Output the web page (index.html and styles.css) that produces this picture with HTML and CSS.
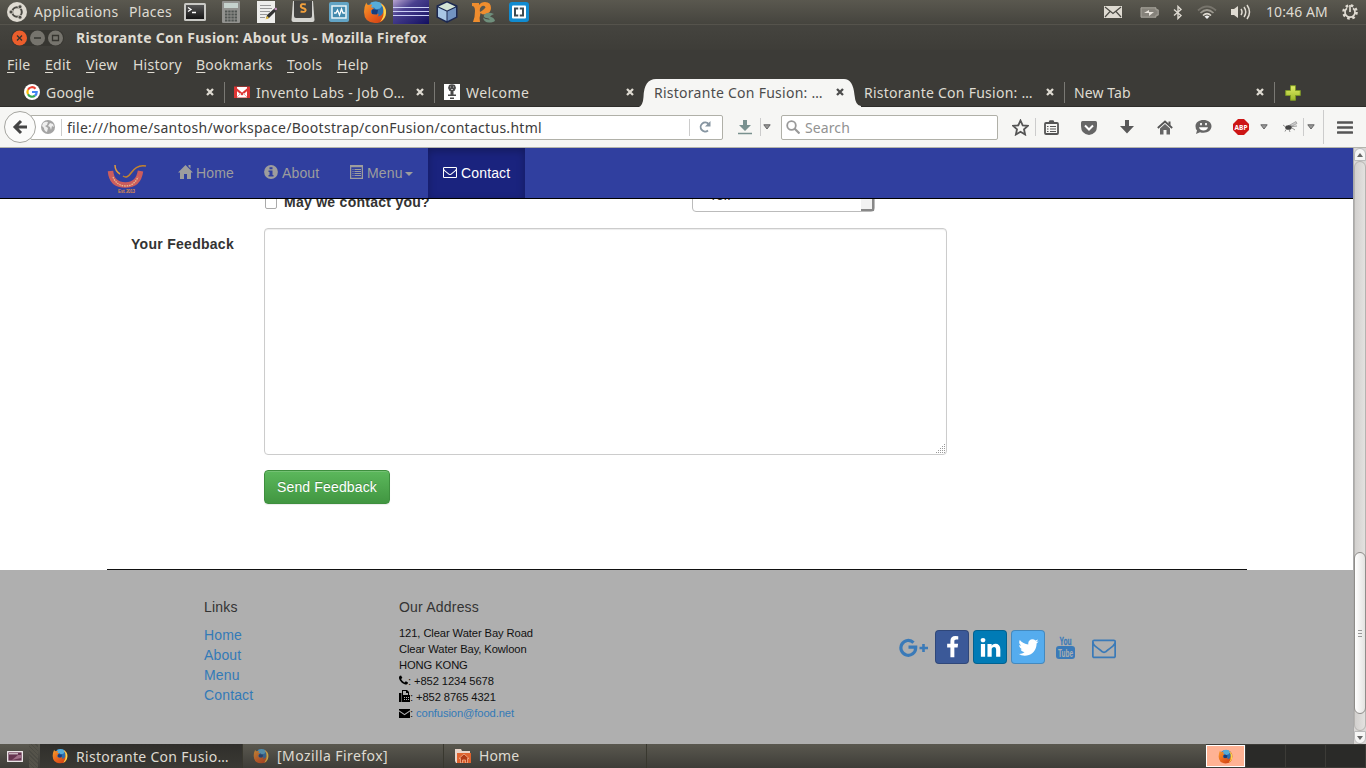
FILE: index.html
```html
<!DOCTYPE html>
<html lang="en">
<head>
<meta charset="utf-8">
<title>Ristorante Con Fusion: About Us</title>
<link rel="stylesheet" href="styles.css">
</head>
<body>
<svg class="defs" width="0" height="0">
  <defs>
    <linearGradient id="g-fox" x1="0" y1="0" x2="1" y2="1"><stop offset="0" stop-color="#f9a02a"/><stop offset=".5" stop-color="#e8621c"/><stop offset="1" stop-color="#c93a14"/></linearGradient>
    <linearGradient id="g-metal" x1="0" y1="0" x2="0" y2="1"><stop offset="0" stop-color="#555"/><stop offset="1" stop-color="#151515"/></linearGradient>
    <linearGradient id="g-space" x1="0" y1="0" x2="1" y2="1"><stop offset="0" stop-color="#b9a6d0"/><stop offset=".35" stop-color="#4a4190"/><stop offset="1" stop-color="#120f60"/></linearGradient>
    <linearGradient id="g-plus" x1="0" y1="0" x2="0" y2="1"><stop offset="0" stop-color="#e2ee68"/><stop offset="1" stop-color="#9cb828"/></linearGradient>
    <symbol id="firefox" viewBox="0 0 24 24">
      <circle cx="12.500" cy="11.500" r="10" fill="#2c6fae"/>
      <path d="M8 2.500q7-3 12 2l-3 4-4 1-2-2-5 1z" fill="#56acd9"/>
      <path d="M9 9l6 1-1 5-5-1z" fill="#173c7c"/>
      <path d="M3.200 2.500q.6 2 2 2.500 2-1 4-.2L8 7.200l3 1-3 2.200q-.8 4 3.400 4.200 2.500 0 3.600-1.200 1.500 1.200-.5 3 5.500-.2 6-6.500 0-4-3-7 5.600 2.700 5.600 9Q22.500 23 12 23 1.200 22.600 1 12q0-5 2.200-9.500z" fill="url(#g-fox)"/>
      <path d="M17.500 3.500q6 3 5.500 9.500-.5 6-6 9 4-5 3.500-9.500.5-5-3-9z" fill="#fbd64b"/>
    </symbol>
    <symbol id="close" viewBox="0 0 8 8"><path d="M1 1l6 6M7 1l-6 6" stroke="currentColor" stroke-width="2.300" fill="none"/></symbol>
    <symbol id="caret" viewBox="0 0 8 6"><path d="M.8.8h6.400L4 5z" fill="#999" stroke="#666" stroke-width="1"/></symbol>
    <symbol id="mail-o" viewBox="0 0 1792 1792"><path fill="currentColor" d="M1664 1504v-768q-32 36-69 66-268 206-426 338-51 43-83 67t-86.500 48.500-102.500 24.500h-2q-48 0-102.500-24.500t-86.500-48.500-83-67q-158-132-426-338-37-30-69-66v768q0 13 9.500 22.500t22.500 9.500h1472q13 0 22.500-9.500t9.500-22.500zm0-1051v-24.500l-.5-13-3-12.500-5.500-9-9-7.500-14-2.500h-1472q-13 0-22.500 9.500t-9.500 22.500q0 168 147 284 193 152 401 317 6 5 35 29.500t46 37.500 44.500 31.500 50.500 27.500 43 9h2q20 0 43-9t50.500-27.500 44.500-31.500 46-37.500 35-29.500q208-165 401-317 54-43 100.500-115.500t46.500-131.500zm128-37v1088q0 66-47 113t-113 47h-1472q-66 0-113-47t-47-113v-1088q0-66 47-113t113-47h1472q66 0 113 47t47 113z"/></symbol>
  </defs>
</svg>

<header class="panel">
  <svg class="ubuntu" viewBox="0 0 20 20"><circle cx="10" cy="10" r="10" fill="#dfdbd2"/><circle cx="10" cy="10" r="4.800" fill="none" stroke="#4b4a44" stroke-width="2"/><g fill="#4b4a44" stroke="#dfdbd2" stroke-width=".8"><circle cx="4" cy="10" r="2"/><circle cx="13" cy="4.800" r="2"/><circle cx="13" cy="15.200" r="2"/></g></svg>
  <span class="apps">Applications</span><span class="places">Places</span>
  <div class="launchers">
    <svg width="22" height="18" viewBox="0 0 22 18"><rect width="22" height="18" rx="1.500" fill="#c9c9c5"/><rect x="2" y="2" width="18" height="14" fill="url(#g-metal)"/><path d="M4 4.500l3 2-3 2M8 9.500h4" fill="none" stroke="#fff" stroke-width="1.300"/></svg>
    <svg width="18" height="22" viewBox="0 0 18 22"><rect width="18" height="22" rx="1" fill="#92928f"/><rect x="2" y="2" width="14" height="5" fill="#c5d2cd"/><path d="M3 10.500h12M3 13.500h12M3 16.500h12M3 19.500h12" stroke="#505552" stroke-width="2" stroke-dasharray="2.400 .8"/></svg>
    <svg width="20" height="22" viewBox="0 0 20 22"><rect width="18" height="22" fill="#eeeeec"/><path d="M3 4.500h11M3 7.500h12M3 10.500h10M3 13.500h7M3 16.500h5" stroke="#999"/><path d="M9 18l1-4 8-7 2 2-8 8z" fill="#333"/><path d="M17 8l2-1.500 1.500 1.500-1.500 1.500z" fill="#c590bd"/><path d="M8.500 18.500l1.500-3.500 2 2z" fill="#efc33a"/></svg>
    <svg width="24" height="22" viewBox="0 0 24 22"><path d="M2 0h20l1.500 19q0 2-2 2h-19q-2 0-2-2z" fill="#d4d4d0"/><path d="M3 0h18v15q0 2-2 2H5q-2 0-2-2z" fill="#434341"/><path d="M14.800 3.500q-5-1.200-5 1.500 0 1.800 2.500 2.300t2.300 2.200q-.5 2.200-5 1" fill="none" stroke="#f2a03c" stroke-width="1.900"/></svg>
    <svg width="20" height="20" viewBox="0 0 20 20"><rect width="20" height="20" rx="2" fill="#62a4c5"/><rect x="3" y="4" width="14" height="12" fill="#438aae" stroke="#e9f4f7" stroke-width="1.500"/><path d="M5 11h2l1.500-3 2 5 2-6 1.500 4h2" fill="none" stroke="#fff" stroke-width="1.300"/></svg>
    <svg width="24" height="24"><use href="#firefox"/></svg>
    <svg width="36" height="24" viewBox="0 0 36 24"><rect width="36" height="24" fill="url(#g-space)"/><path d="M0 7.500h36M0 11.500h36M0 15.500h36" stroke="#cbd0f5" stroke-width="1.200"/></svg>
    <svg width="24" height="24" viewBox="0 0 24 24"><path d="M12 1l10.500 4.500v12L12 23 1.500 17.500v-12z" fill="#1c2850"/><path d="M12 2.500l8.500 4L12 10.500 3.500 6.500z" fill="#d5e5d5"/><path d="M3 7.500l8.500 4v9.500L3 16.800z" fill="#a8c6e5"/><path d="M21 7.500l-8.500 4v9.500l8.500-4.200z" fill="#7293c1"/></svg>
    <svg width="24" height="22" viewBox="0 0 24 22"><path d="M1 2h7v2q2-3 6-3 6 0 6 6 0 5-6 6.500-3 0-4.500-1.500Q8 17 9 21H2q2-5 2-11 0-5-3-5z" fill="#ef8d2e"/><path d="M9 11q-1-4 2-6 3-1 3.500 1.500Q13 8 12 9t-3 2z" fill="#57564e"/><path d="M23 13q-7-3-10 1-1 2 2 3 3 0 4 1.500-4 .5-7-2 1 5 6 5 5 0 6-2-1-3-5-4 2-2 4-2.500z" fill="#6f8f7c"/></svg>
    <svg width="20" height="20" viewBox="0 0 20 20"><rect width="20" height="20" rx="3" fill="#118bd0"/><rect x="3" y="3.500" width="14" height="13" rx="1" fill="#fff"/><rect x="5" y="5.500" width="10" height="9" fill="#3c4a52"/><rect x="7" y="7.500" width="6" height="5" fill="#fff"/><path d="M10 5v3M10 12v3" stroke="#fff" stroke-width="1.500"/></svg>
  </div>
  <div class="tray">
    <svg class="t-mail" viewBox="0 0 18 12"><rect width="18" height="12" fill="#dfdbd2"/><path d="M1 1l8 6.500L17 1M1 11l5-5.500M17 11l-5-5.500" fill="none" stroke="#4b4a44" stroke-width="1.200"/></svg>
    <svg class="t-batt" viewBox="0 0 19 11"><path d="M1 .8h15v2h2.200v5.400H16v2H1z" fill="#85827a" stroke="#aaa79e"/><path d="M4 6l5-3v2h5l-5 4V6z" fill="#e7e3db"/></svg>
    <svg class="t-bt" viewBox="0 0 10 14"><path d="M1 4l7 6-3 3V1l3 3-7 6" fill="none" stroke="#dfdbd2" stroke-width="1.400"/></svg>
    <svg class="t-wifi" viewBox="0 0 20 14"><g fill="none" stroke-width="1.700"><path d="M1 5.500q9-8 18 0" stroke="#77746c"/><path d="M3.500 8q6.500-6 13 0" stroke="#9b988f"/><path d="M6 10.500q4-3.800 8 0" stroke="#dfdbd2"/></g><path d="M7.500 11.500q2.500-2 5 0L10 14z" fill="#eee"/></svg>
    <svg class="t-vol" viewBox="0 0 20 16"><path d="M0 5h3l4-3v12l-4-3H0z" fill="#dfdbd2"/><path d="M10 5q2 3 0 6M13 3q3.500 5 0 10M16 1q5 7 0 14" fill="none" stroke="#dfdbd2" stroke-width="1.500"/></svg>
    <span class="clock">10:46 AM</span>
    <svg class="t-gear" viewBox="0 0 16 16"><circle cx="8" cy="8" r="6.500" fill="none" stroke="#dfdbd2" stroke-width="2.600" stroke-dasharray="2.500 2.605"/><path d="M5 4.200a5 5 0 1 0 6 0M8 1v7" fill="none" stroke="#dfdbd2" stroke-width="1.700"/></svg>
  </div>
</header>

<div class="titlebar">
  <svg class="controls" viewBox="0 0 53 16"><rect width="53" height="16" rx="8" fill="#373631"/><circle cx="8.500" cy="8" r="7.500" fill="#ec5e2c"/><circle cx="26.500" cy="8" r="7.500" fill="#76746d"/><circle cx="44.500" cy="8" r="7.500" fill="#76746d"/><path d="M6 5.500l5 5M11 5.500l-5 5M23 8h7M41.500 5.500h6v5h-6z" fill="none" stroke="#35342f" stroke-width="1.300"/></svg>
  <span class="title">Ristorante Con Fusion: About Us - Mozilla Firefox</span>
</div>
<nav class="menubar">
  <span class="m-file"><u>F</u>ile</span><span class="m-edit"><u>E</u>dit</span><span class="m-view"><u>V</u>iew</span><span class="m-hist">Hi<u>s</u>tory</span><span class="m-book"><u>B</u>ookmarks</span><span class="m-tool"><u>T</u>ools</span><span><u>H</u>elp</span>
</nav>
<div class="tabs">
  <div class="tab"><svg class="fav" viewBox="0 0 16 16"><circle cx="8" cy="8" r="8" fill="#fff"/><g fill="none" stroke-width="2.200"><path d="M11.500 4.700A4.600 4.600 0 0 0 4 5.800" stroke="#ea4335"/><path d="M4 5.800a4.600 4.600 0 0 0 0 4.400" stroke="#fbbc05"/><path d="M4 10.200a4.600 4.600 0 0 0 7 1.500" stroke="#34a853"/><path d="M8 8h4.700q0 2.300-1.700 3.700" stroke="#4285f4"/></g></svg><span class="label t-g">Google</span><svg class="x"><use href="#close"/></svg></div>
  <div class="tab"><svg class="fav" viewBox="0 0 16 16"><rect y="2.500" width="16" height="11.500" fill="#dd3534"/><path d="M3 3h10v10.500H3z" fill="#fff"/><path d="M1 4l7 6 7-6" fill="none" stroke="#dd3534" stroke-width="2.200"/><path d="M3 13l4-4M13 13L9 9" stroke="#e9a9a7"/></svg><span class="label t-i">Invento Labs - Job O…</span><svg class="x"><use href="#close"/></svg></div>
  <div class="tab"><svg class="fav" viewBox="0 0 16 16"><rect width="16" height="16" fill="#fff"/><path d="M5 1q3-1.500 6 0l1 3-1.500 3h-5L4 4zM6.500 7h3v3.500h-3zM4 10.500h8V12H4zM6 13.500h4V15H6z" fill="#4a4a4a"/><path d="M6 3h1M9 3h1M7 5.500h2" stroke="#bbb"/></svg><span class="label t-w">Welcome</span><svg class="x"><use href="#close"/></svg></div>
  <div class="tab active"><svg class="shape" viewBox="0 0 222 29"><path d="M0 29q4-2 4.500-10Q5 1 17 1h188q9 0 10.500 16 1 11 6.500 11v1z" fill="#f6f6f4"/></svg><span class="label t-r">Ristorante Con Fusion: …</span><svg class="x"><use href="#close"/></svg></div>
  <div class="tab"><span class="label t-r">Ristorante Con Fusion: …</span><svg class="x"><use href="#close"/></svg></div>
  <div class="tab"><span class="label t-n">New Tab</span><svg class="x"><use href="#close"/></svg></div>
  <svg class="newtab" viewBox="0 0 16 16"><path d="M5.500.7h5v4.800h4.800v5h-4.800v4.800h-5v-4.800H.7v-5h4.800z" fill="url(#g-plus)" stroke="#7c9726"/></svg>
</div>

<div class="toolbar">
  <svg class="back" viewBox="0 0 34 34"><circle cx="17" cy="17" r="15.500" fill="#fbfbfa" stroke="#a5a5a0"/><path d="M24 17H12.500M18 11l-6 6 6 6" fill="none" stroke="#444" stroke-width="3"/></svg>
  <div class="urlbar">
    <svg class="globe" viewBox="0 0 14 14"><circle cx="7" cy="7" r="7" fill="#a4a4a4"/><path d="M2 3q3-2 5-1L6 5 4 6l3 2-1 4q-3-1-3-4L1 6zM9 3l3 1 1 3-2-1-1 4-1-3-2-1z" fill="#eee"/></svg>
    <span class="url">file:///home/santosh/workspace/Bootstrap/conFusion/contactus.html</span>
    <svg class="reload" viewBox="0 0 12 12"><path d="M9 9.500A4.500 4.500 0 1 1 9.500 3" fill="none" stroke="#8695a1" stroke-width="1.900"/><path d="M11.500 0v5.500H6z" fill="#8695a1"/></svg>
  </div>
  <svg class="dl" viewBox="0 0 14 16"><path d="M5 1h4v5h4l-6 6-6-6h4z" fill="#79918f"/><path d="M0 14.500h14" stroke="#79918f" stroke-width="1.500"/></svg>
  <i class="sep"></i><svg class="car c1"><use href="#caret"/></svg>
  <div class="search"><svg viewBox="0 0 14 14"><circle cx="5.500" cy="5.500" r="4.300" fill="none" stroke="#999" stroke-width="1.800"/><path d="M8.500 8.500l5 5" stroke="#999" stroke-width="2.200"/></svg><span>Search</span></div>
  <div class="cell star"><svg width="17" height="17" viewBox="0 0 17 17"><path d="M8.500 1.500l2.200 4.800 5.200.5-3.900 3.500 1.100 5.200-4.600-2.700-4.600 2.700L5 10.300 1.100 6.800l5.200-.5z" fill="none" stroke="#555" stroke-width="1.800"/></svg></div>
  <i class="sep"></i>
  <div class="cell w30"><svg width="15" height="15" viewBox="0 0 15 15"><rect x="1" y="3" width="13" height="11" rx="1" fill="none" stroke="#555" stroke-width="1.800"/><path d="M5 3l1-2h3l1 2z" fill="#555" stroke="#555" stroke-width="1.400"/><path d="M3 6.500h1.500M6 6.500h6M3 9h1.500M6 9h6M3 11.500h1.500M6 11.500h6" stroke="#555" stroke-width="1.200"/></svg></div>
  <div class="cell w46"><svg width="16" height="15" viewBox="0 0 16 15"><path d="M1.500 1h13q1.500 0 1.500 1.500V6q0 8-8 9Q0 14 0 6V2.500Q0 1 1.500 1z" fill="#666"/><path d="M4 5.500l4 4 4-4" fill="none" stroke="#fff" stroke-width="2"/></svg></div>
  <div class="cell w30"><svg width="14" height="14" viewBox="0 0 14 14"><path d="M5 0h4v6h5l-7 7.500L0 6h5z" fill="#595959"/></svg></div>
  <div class="cell w46"><svg width="16" height="15" viewBox="0 0 16 15"><path d="M.8 8L8 1.500 15.200 8" fill="none" stroke="#555" stroke-width="1.800"/><path d="M3 8.500L8 4l5 4.500V14.500H9.500V10h-3v4.500H3z" fill="#666"/><path d="M11.500 1.500h2v4l-2-2z" fill="#555"/></svg></div>
  <div class="cell w30"><svg width="17" height="16" viewBox="0 0 17 16"><path d="M8.500 1c4.500 0 8 2.500 8 6.200s-3.500 6.500-8 6.500q-2 0-3.500-.5L1 15l1-3.500Q.5 10 .5 7.200C.5 3.500 4 1 8.500 1z" fill="#666"/><path d="M6 4v2.200M11 4v2.200" stroke="#fff" stroke-width="1.700"/><path d="M4 8.300h9q-1 3.200-4.500 3.200T4 8.300z" fill="#fff"/></svg></div>
  <div class="cell abp"><svg width="16" height="16" viewBox="0 0 16 16"><path d="M5 0h6l5 5v6l-5 5H5l-5-5V5z" fill="#cd1515"/><text x="1.500" y="10.700" textLength="13" lengthAdjust="spacingAndGlyphs">ABP</text></svg></div>
  <div class="cell w14"><svg class="car"><use href="#caret"/></svg></div>
  <div class="cell fly"><svg width="16" height="14" viewBox="0 0 16 14"><path d="M5 6L13 1.500l1 2L9 6z" fill="#ccc" stroke="#888" stroke-width=".6"/><ellipse cx="5.500" cy="7.500" rx="3.300" ry="2.300" fill="#444"/><path d="M2 6.500L0 5M3 9.500l-1 2M6 9.500l1 2.500M9 8l3 2M8 6.500l6-.5" stroke="#777" stroke-width=".8"/></svg></div>
  <i class="sep"></i>
  <div class="cell w14"><svg class="car"><use href="#caret"/></svg></div>
  <i class="sep tall"></i>
  <div class="cell burger"><svg width="16" height="13" viewBox="0 0 16 13"><path d="M1 1.500h14M1 6.500h14M1 11.500h14" stroke="#555" stroke-width="2.600" stroke-linecap="round"/></svg></div>
</div>

<div class="viewport">
  <div class="page">
    <nav class="navbar">
      <svg class="brand" viewBox="0 0 40 30"><path d="M3.500 8q1 14 15 14 13 0 15-14" fill="none" stroke="#cc5d5d" stroke-width="5.500"/><path d="M6 14q4 9 12.500 9T31 14" fill="none" stroke="#e9bf91" stroke-width="1.300" stroke-dasharray="1.500 1"/><path d="M8 2q0 6 5 9" fill="none" stroke="#dd9a3e" stroke-width="1.500"/><path d="M16 13q4 3 8-3 6-9 15-7" fill="none" stroke="#c5842e" stroke-width="1.500"/><text x="11" y="29.500" textLength="17">Est. 2013</text></svg>
      <a class="n-home"><svg width="15" height="14" viewBox="0 0 15 14"><path d="M7.500 0L15 7.500h-2V14H9V9H6v5H2V7.500H0zM10.500 0h2v3.500l-2-2z" fill="#9d9d9d"/></svg><span>Home</span></a>
      <a class="n-about"><svg width="14" height="14" viewBox="0 0 14 14"><circle cx="7" cy="7" r="6.900" fill="#9d9d9d"/><path d="M5.500 2.200h3v2h-3zM4.500 5.500h4v4.500h1v1.500h-5V10h1V7h-1z" fill="#303f9f"/></svg><span>About</span></a>
      <a class="n-menu"><svg width="13" height="14" viewBox="0 0 13 14"><path d="M.6.6h11.800v12.800H.6zM.6 1.500h11.800" fill="none" stroke="#9d9d9d" stroke-width="1.300"/><path d="M2.500 4.500h1M4.500 4.500h6.500M2.500 6.500h1M4.500 6.500h6.500M2.500 8.500h1M4.500 8.500h6.500M2.500 10.500h1M4.500 10.500h6.500" stroke="#9d9d9d"/></svg><span>Menu</span><b class="caret"></b></a>
      <a class="n-contact"><svg width="14" height="14"><use href="#mail-o"/></svg><span>Contact</span></a>
    </nav>
    <form class="form">
      <div class="row approve"><i class="check"></i><b>May we contact you?</b><div class="select"><span>Tel.</span><i class="arrow"></i></div></div>
      <div class="row feedback"><label>Your Feedback</label><div class="area"><svg viewBox="0 0 10 10"><path d="M8 0h1v1H8zM6 2h1v1H6zM8 2h1v1H8zM4 4h1v1H4zM6 4h1v1H6zM8 4h1v1H8zM2 6h1v1H2zM4 6h1v1H4zM6 6h1v1H6zM8 6h1v1H8zM0 8h1v1H0zM2 8h1v1H2zM4 8h1v1H4zM6 8h1v1H6zM8 8h1v1H8z" fill="#999"/></svg></div></div>
      <span class="send">Send Feedback</span>
    </form>
    <footer>
      <div class="links"><h5>Links</h5><a>Home</a><a>About</a><a>Menu</a><a>Contact</a></div>
      <div class="address"><h5>Our Address</h5>
        <p>121, Clear Water Bay Road</p><p>Clear Water Bay, Kowloon</p><p>HONG KONG</p>
        <p><svg width="9" height="11" viewBox="192 150 1408 1500"><path d="M1600 1240q0 27-10 70.500t-21 68.500q-21 50-122 106-94 51-186 51-27 0-53-3.500t-57.500-12.500-47-14.500-55.500-20.500-49-18q-98-35-175-83-127-79-264-216t-216-264q-48-77-83-175-3-9-18-49t-20.500-55.500-14.500-47-12.500-57.500-3.500-53q0-92 51-186 56-101 106-122 25-11 68.500-21t70.500-10q14 0 21 3 18 6 53 76 11 19 30 54t35 63.500 31 53.500q3 4 17.500 25t21.500 35.500 7 28.500q0 20-28.500 50t-62 55-62 53-28.500 46q0 9 5 22.500t8.500 20.500 14 24 11.500 19q76 137 174 235t235 174q2 1 19 11.500t24 14 20.500 8.500 22.500 5q18 0 46-28.500t53-62 55-62 50-28.500q14 0 28.500 7t35.500 21.500 25 17.500q25 15 53.500 31t63.500 35 54 30q70 35 76 53 3 7 3 21z"/></svg>: +852 1234 5678</p>
        <p><svg width="11" height="12" viewBox="0 0 11 12"><path d="M0 3h2.500v9H0zM3 5V0h5l2 2v3h1v7H3z"/><path d="M4 1h3v2h2v2H4z" fill="#afafaf"/><path d="M5 7.500h1M7 7.500h1M9 7.500h1M5 9.500h1M7 9.500h1M9 9.500h1" stroke="#afafaf"/></svg>: +852 8765 4321</p>
        <p><svg width="11" height="10" viewBox="0 0 11 10"><path d="M0 1h11v1.200L5.500 6 0 2.200zM0 3.500L5.500 7.200 11 3.500V10H0z"/></svg>: <a>confusion@food.net</a></p>
      </div>
      <div class="social">
        <svg class="gp" viewBox="0 0 29 20"><path d="M14.500 4.600A7.400 7.400 0 1 0 16.700 10v-.8H9.500" fill="none" stroke="#3a7ab8" stroke-width="3.200"/><path d="M24.500 6v8M20.500 10h8.500" stroke="#3a7ab8" stroke-width="2.600"/></svg>
        <span class="btn fb"><svg viewBox="0 0 1792 1792"><path fill="#fff" d="M1343 12v264h-157q-86 0-116 36t-30 108v189h293l-39 296h-254v759h-306v-759h-255v-296h255v-218q0-186 104-288.500t277-102.500q147 0 228 12z"/></svg></span>
        <span class="btn li"><svg viewBox="0 0 1792 1792"><path fill="#fff" d="M477 625v991h-330v-991h330zm21-306q1 73-50.500 122t-135.500 49h-2q-82 0-132-49t-50-122q0-74 51.500-122.500t134.500-48.500 133 48.500 51 122.500zm1166 729v568h-329v-530q0-105-40.500-164.500t-126.500-59.500q-63 0-105.500 34.500t-63.500 85.500q-11 30-11 81v553h-329q2-399 2-647t-1-296l-1-48h329v144h-2q20-32 41-56t56.500-52 87-43.500 114.500-15.500q171 0 275 113.500t104 332.500z"/></svg></span>
        <span class="btn tw"><svg viewBox="0 0 1792 1792"><path fill="#fff" d="M1684 408q-67 98-162 167 1 14 1 42 0 130-38 259.500t-115.500 248.500-184.500 210.500-258 146-323 54.500q-271 0-496-145 35 4 78 4 225 0 401-138-105-2-188-64.500t-114-159.500q33 5 61 5 43 0 85-11-112-23-185.500-111.500t-73.500-205.500v-4q68 38 146 41-66-44-105-115t-39-154q0-88 44-163 121 149 294.500 238.500t371.500 99.500q-8-38-8-74 0-134 94.500-228.500t228.500-94.500q140 0 236 102 109-21 205-78-37 115-142 178 93-10 186-50z"/></svg></span>
        <svg class="yt" viewBox="0 0 19 24"><text x="3.500" y="8.700" textLength="12" lengthAdjust="spacingAndGlyphs" fill="#3a7ab8" stroke="#3a7ab8" stroke-width=".3">You</text><rect y="10" width="19" height="13" rx="3" fill="#3a7ab8"/><text x="2" y="20.700" textLength="15" lengthAdjust="spacingAndGlyphs" fill="#afafaf">Tube</text></svg>
        <svg class="em"><use href="#mail-o"/></svg>
      </div>
    </footer>
  </div>
  <div class="scroll">
    <i class="up"><svg viewBox="0 0 6 4"><path d="M0 4l3-4 3 4z" fill="#666"/></svg></i>
    <div class="track"><div class="thumb"><i></i><i></i><i></i></div></div>
    <i class="down"><svg viewBox="0 0 6 4"><path d="M0 0l3 4 3-4z" fill="#666"/></svg></i>
  </div>
</div>

<div class="taskbar">
  <svg class="desk" viewBox="0 0 16 11"><rect x=".7" y=".7" width="14.600" height="9.600" fill="#65344f" stroke="#f3eef0" stroke-width="1.300"/><path d="M2 2.800h9" stroke="#f3eef0"/><path d="M5 9l6-5h3v3z" fill="#a06f88"/></svg>
  <i class="grip"></i>
  <div class="task on"><svg width="16" height="16"><use href="#firefox"/></svg><span class="k1">Ristorante Con Fusio…</span></div>
  <div class="task dim"><svg width="16" height="16"><use href="#firefox"/></svg><span class="k2">[Mozilla Firefox]</span></div>
  <div class="task home"><svg width="16" height="14" viewBox="0 0 16 14"><path d="M0 0h6l1 2h8v12H1L0 12z" fill="#e9d5ca"/><path d="M2 4h14v10H2z" fill="#e0632f"/><path d="M4 9.500L9 5l5 4.500h-1.500V14h-2v-3h-3v3h-2V9.500z" fill="#b03a16" stroke="#f2b08d" stroke-width=".8"/></svg><span class="k3">Home</span></div>
  <div class="spaces"><span class="ws cur"><svg width="15" height="15"><use href="#firefox"/></svg></span><span class="ws"></span><span class="ws"></span><span class="ws"></span></div>
</div>
</body>
</html>
```
FILE: styles.css
```css
* { box-sizing: border-box; }
body { margin: 0; width: 1366px; height: 768px; overflow: hidden; background: #3c3b37; color: #dfdbd2; font: 14px/20px "Noto Sans", sans-serif; white-space: nowrap; }
svg { display: block; flex: none; }
i, span { flex: none; font-style: normal; }
.defs { position: absolute; }

.panel { height: 25px; display: flex; align-items: center; background: linear-gradient(#5a584f, #45443e); border-bottom: 1px solid #55534c; padding-left: 7px; }
.ubuntu { width: 20px; height: 20px; margin-right: 7px; }
.apps { width: 95px; letter-spacing: .35px; }
.places { width: 48px; letter-spacing: .3px; }
.launchers { display: grid; grid-template-columns: repeat(10, 36px); justify-items: center; align-items: center; height: 24px; }
.tray { margin-left: auto; display: flex; align-items: center; padding-right: 8px; }
.t-mail { width: 18px; height: 12px; margin-right: 18px; }
.t-batt { width: 19px; height: 11px; margin-right: 14px; }
.t-bt { width: 10px; height: 15px; margin-right: 14px; }
.t-wifi { width: 20px; height: 14px; margin-right: 14px; }
.t-vol { width: 20px; height: 16px; margin-right: 15px; }
.clock { width: 76px; letter-spacing: .1px; }
.t-gear { width: 16px; height: 16px; }

.titlebar { height: 25px; display: flex; align-items: center; padding-left: 11px; background: linear-gradient(#45443f, #3e3d38); }
.controls { width: 53px; height: 16px; margin-right: 12px; }
.title { font-weight: 700; letter-spacing: .27px; }
.menubar { height: 28px; display: flex; align-items: center; padding: 2px 0 0 7px; letter-spacing: .25px; }
.menubar u { text-decoration-thickness: 1px; text-underline-offset: 2px; }
.m-file { width: 38px; } .m-edit { width: 41px; } .m-view { width: 47px; } .m-hist { width: 63px; } .m-book { width: 91px; } .m-tool { width: 50px; }

.tabs { height: 29px; display: flex; padding-left: 15px; border-bottom: 1px solid #2e2d2a; }
.tab { position: relative; width: 210px; height: 28px; padding: 0 11px 0 9px; display: flex; align-items: center; background: linear-gradient(#7a7974, #7a7974) right 4px / 1px 21px no-repeat; }
.tab:nth-child(3), .tab.active { background: none; }
.fav { width: 16px; height: 16px; margin-right: 6px; }
.label { position: relative; padding-top: 2px; }
.t-g { letter-spacing: .2px; } .t-i { letter-spacing: .3px; } .t-w { letter-spacing: .4px; } .t-r { letter-spacing: .26px; } .t-n { letter-spacing: .1px; }
.x { position: relative; width: 8px; height: 8px; margin-left: auto; }
.active { color: #4c4c4c; }
.shape { position: absolute; left: -6px; top: 0; width: 222px; height: 29px; }
.newtab { width: 16px; height: 16px; margin: 7px 0 0 10px; }

.toolbar { height: 41px; display: flex; align-items: center; background: #f6f6f4; border-bottom: 1px solid #b4b4ac; padding-left: 3px; color: #3c3c3c; }
.back { width: 34px; height: 34px; position: relative; }
.urlbar { width: 693px; height: 25px; margin-left: -7px; padding-left: 10px; border: 1px solid #b0b0a8; background: #fff; display: flex; align-items: center; border-radius: 2px; }
.globe { width: 14px; height: 14px; }
.url { width: 629px; height: 17px; line-height: 17px; border: solid #ccc; border-width: 0 1px; margin-left: 6px; padding-left: 5px; letter-spacing: .29px; }
.reload { width: 12px; height: 12px; margin-left: 9px; }
.dl { width: 14px; height: 16px; margin-left: 15px; }
.sep { flex: none; width: 1px; height: 18px; background: #ccc; }
.sep.tall { height: 34px; margin-left: 5px; }
.dl + .sep { margin-left: 8px; }
.car { width: 8px; height: 6px; }
.c1 { margin: 0 10px 0 2px; }
.search { width: 217px; height: 25px; border: 1px solid #b0b0a8; background: #fff; border-radius: 2px; display: flex; align-items: center; color: #929292; padding-left: 4px; letter-spacing: .1px; }
.search span { padding-top: 1px; }
.search svg { width: 14px; height: 14px; margin-right: 5px; }
.cell { flex: none; display: flex; justify-content: center; align-items: center; }
.star { width: 30px; margin-left: 7px; }
.w30 { width: 30px; } .w46 { width: 46px; } .w14 { width: 14px; }
.abp { width: 32px; margin-left: 7px; }
.abp text { font: 700 7.500px "Noto Sans", sans-serif; fill: #fff; }
.fly { width: 24px; margin-left: 8px; }
.burger { width: 30px; margin-left: 6px; }

.viewport { height: 596px; display: flex; font-family: "Liberation Sans", Arial, sans-serif; color: #333; }
.page { width: 1353px; background: #fff; display: flex; flex-direction: column; }
.navbar { height: 51px; flex: none; display: flex; background: #303f9f; border-bottom: 1px solid #000; padding-left: 107px; color: #9d9d9d; }
.navbar a { display: flex; padding: 15px 0 0 15px; height: 50px; letter-spacing: .15px; }
.navbar a svg { margin: 2px 4px 0 0; }
.brand { width: 40px; height: 30px; margin: 15px 16px 0 0; }
.brand text { font: 700 4.500px "Liberation Sans", sans-serif; fill: #dd8a4e; }
.n-home { width: 86px; }
.navbar .n-home svg { margin-right: 3px; }
.n-about { width: 86px; } .n-menu { width: 93px; }
.n-contact { width: 97px; color: #fff; background: #1a237e; box-shadow: inset 0 3px 9px rgba(0,0,0,.25); }
.caret { margin: 9px 0 0 2px; width: 8px; height: 4px; border: 4px solid transparent; border-top-color: #9d9d9d; border-bottom: 0; }

.form { height: 371px; flex: none; margin: 0 106px 0 107px; border-bottom: 1px solid #111; }
.row { display: flex; }
.approve { height: 29px; overflow: hidden; padding-left: 158px; align-items: flex-start; }
.check { width: 12px; height: 16px; margin: -6px 7px 0 0; border: 1px solid #aaa; border-radius: 2px; }
.approve b { width: 408px; margin-top: -7px; letter-spacing: .27px; }
.select { width: 183px; height: 34px; margin-top: -21px; border: 1px solid #bbb; border-radius: 4px; display: flex; justify-content: space-between; padding: 6px 0 0 16px; }
.arrow { width: 13px; height: 26px; background: #f2f2f2; border-right: 2px solid #888; border-bottom: 2px solid #888; }
.feedback label { width: 157px; padding: 6px 30px 0 0; text-align: right; font-weight: 700; letter-spacing: .28px; }
.area { width: 683px; height: 227px; border: 1px solid #ccc; border-radius: 4px; box-shadow: inset 0 1px 1px rgba(0,0,0,.075); display: flex; align-items: flex-end; justify-content: flex-end; }
.area svg { width: 10px; height: 10px; }
.send { display: block; width: 126px; height: 34px; margin: 15px 0 0 157px; border: 1px solid #3e8f3e; border-radius: 4px; background: linear-gradient(#5cb85c, #419641); box-shadow: inset 0 1px 0 rgba(255,255,255,.15), 0 1px 1px rgba(0,0,0,.075); color: #fff; text-align: center; line-height: 32px; letter-spacing: .15px; text-shadow: 0 -1px 0 rgba(0,0,0,.2); }

footer { flex: 1; display: flex; background: #afafaf; padding-left: 204px; }
footer a { color: #337ab7; }
h5 { margin: 0; font-weight: 400; font-size: 14px; line-height: 15px; letter-spacing: .2px; }
.links { width: 195px; padding-top: 30px; letter-spacing: .15px; }
.links h5 { margin-bottom: 10px; }
.links a { display: block; }
.address { width: 500px; padding-top: 30px; color: #111; font-size: 11.200px; line-height: 16px; letter-spacing: -.1px; }
.address h5 { color: #333; margin-bottom: 10px; }
.address p { margin: 0; }
.address p svg { display: inline-block; vertical-align: -1px; }
.social { display: flex; height: 34px; margin-top: 60px; align-items: center; color: #3a7ab8; }
.gp { width: 29px; height: 20px; margin: 2px 7px 0 0; }
.btn { width: 34px; height: 34px; margin-right: 4px; border: 1px solid rgba(0,0,0,.2); border-radius: 4px; display: flex; align-items: center; justify-content: center; }
.btn svg { width: 23px; height: 23px; }
.fb { background: #3b5998; } .li { background: #007bb6; } .tw { background: #55acee; }
.yt { width: 19px; height: 24px; margin: 2px 17px 0 7px; }
.yt text { font: 700 11px "Liberation Sans", sans-serif; }
.em { width: 24px; height: 24px; margin-top: 1px; }

.scroll { width: 13px; background: #d9d7d5; border-left: 1px solid #aaa; display: flex; flex-direction: column; }
.up, .down { height: 13px; background: #f6f6f5; border: 1px solid #bbb; border-radius: 6px 6px 0 0; display: flex; align-items: center; justify-content: center; }
.down { border-radius: 0 0 6px 6px; }
.up svg, .down svg { width: 6px; height: 4px; }
.track { flex: 1; background: linear-gradient(90deg, #d2d0ce, #e3e1df); border: 1px solid #b5b3b0; border-radius: 6px; padding-top: 390px; }
.thumb { height: 162px; margin: 0 -1px; border: 1px solid #8f8d8a; border-radius: 6px; background: linear-gradient(90deg, #fff, #e4e3e1); display: flex; flex-direction: column; align-items: center; justify-content: center; gap: 2px; }
.thumb i { width: 4px; height: 1px; background: #999; }

.taskbar { height: 24px; display: flex; align-items: center; background: linear-gradient(#5a584f, #3e3d38); padding-left: 7px; }
.desk { width: 16px; height: 11px; }
.grip { width: 9px; height: 24px; margin: 0 1px 0 6px; background: repeating-linear-gradient(45deg, #4b4a43 0 1px, #55534a 1px 3px); }
.task { height: 24px; display: flex; align-items: center; border-right: 1px solid #39382f; }
.k1 { padding-top: 2px; letter-spacing: .3px; }
.k2 { letter-spacing: .42px; }
.k3 { letter-spacing: .1px; }
.on { width: 203px; margin-left: 1px; padding-left: 12px; background: linear-gradient(#302f2b, #3a3934); }
.on svg { margin-right: 8px; }
.dim { width: 201px; padding-left: 10px; }
.dim svg { opacity: .65; margin-right: 8px; }
.home { width: 203px; padding-left: 11px; }
.home svg { margin-right: 8px; }
.spaces { margin-left: auto; display: grid; grid-template-columns: repeat(4, 40px); height: 24px; background: #3c3b37; }
.ws { margin: 1px 1px 1px 0; background: #2a2a28; display: flex; align-items: center; justify-content: center; }
.cur { background: #ffb294; border: 1px solid #fff; }
```
